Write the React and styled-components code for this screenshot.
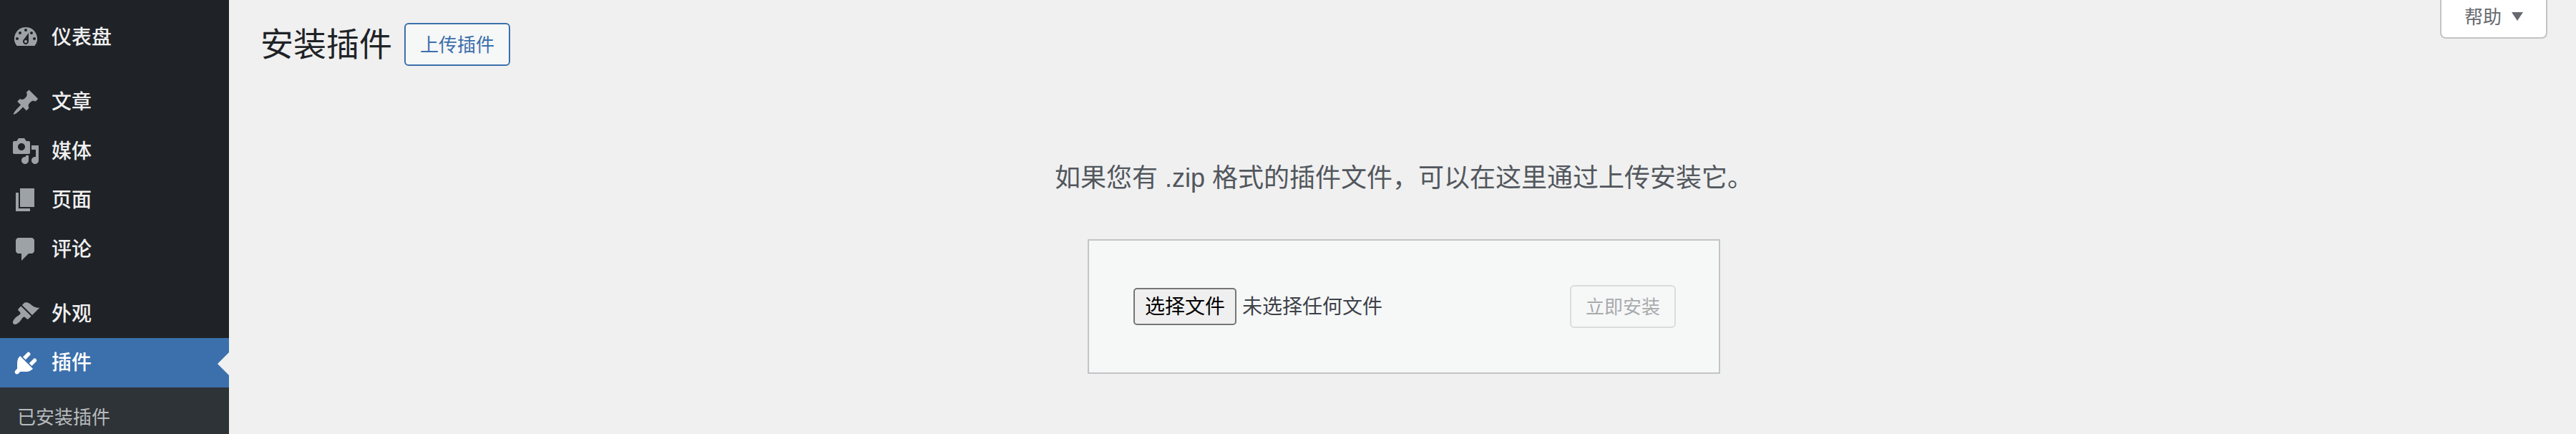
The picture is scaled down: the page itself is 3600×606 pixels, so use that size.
import React, { useRef, useState } from 'react';
import styled, { createGlobalStyle } from 'styled-components';

// 20x20 icon paths for the admin menu
const icons = {
  dashboard:
    'M3.76 16h12.48A7.998 7.998 0 0010 3a7.998 7.998 0 00-6.24 13zM10 4c.55 0 1 .45 1 1s-.45 1-1 1-1-.45-1-1 .45-1 1-1zM6 6c.55 0 1 .45 1 1s-.45 1-1 1-1-.45-1-1 .45-1 1-1zm8 0c.55 0 1 .45 1 1s-.45 1-1 1-1-.45-1-1 .45-1 1-1zm-5.37 5.55L12 7v6c0 1.1-.9 2-2 2s-2-.9-2-2c0-.57.24-1.08.63-1.45zM4 10c.55 0 1 .45 1 1s-.45 1-1 1-1-.45-1-1 .45-1 1-1zm12 0c.55 0 1 .45 1 1s-.45 1-1 1-1-.45-1-1 .45-1 1-1zm-5 3c0-.55-.45-1-1-1s-1 .45-1 1 .45 1 1 1 1-.45 1-1z',
  post:
    'M10.44 3.02l1.82-1.82 6.36 6.35-1.83 1.82c-1.05-.68-2.48-.57-3.41.36l-.75.75c-.92.93-1.04 2.35-.35 3.41l-1.83 1.82-2.41-2.41-2.8 2.79c-.42.42-3.38 2.71-3.8 2.29s1.86-3.39 2.28-3.81l2.79-2.79L4.1 9.36l1.83-1.82c1.05.69 2.48.57 3.4-.36l.75-.75c.93-.92 1.05-2.35.36-3.41z',
  media:
    'M13 11V4c0-.55-.45-1-1-1h-1.67L9 1H5L3.67 3H2c-.55 0-1 .45-1 1v7c0 .55.45 1 1 1h10c.55 0 1-.45 1-1zM7 4.5c1.38 0 2.5 1.12 2.5 2.5S8.38 9.5 7 9.5 4.5 8.38 4.5 7 5.62 4.5 7 4.5zM14 6h5v10.5c0 1.38-1.12 2.5-2.5 2.5S14 17.88 14 16.5s1.12-2.5 2.5-2.5c.17 0 .34.02.5.05V9h-3V6zm-4 8.05V13h2v3.5c0 1.38-1.12 2.5-2.5 2.5S7 17.88 7 16.5 8.12 14 9.5 14c.17 0 .34.02.5.05z',
  page: 'M6 15V2h10v13H6zm-1 1h8v2H3V5h2v11z',
  comments:
    'M5 2h9c1.1 0 2 .9 2 2v7c0 1.1-.9 2-2 2h-2l-5 5v-5H5c-1.1 0-2-.9-2-2V4c0-1.1.9-2 2-2z',
  appearance:
    'M14.48 11.06L7.41 3.99l1.5-1.5c.5-.56 2.3-.47 3.51.32 1.21.8 1.43 1.28 2.91 2.1 1.18.64 2.45 1.26 4.45.85zm-.71.71L6.7 4.7 4.93 6.47c-.39.39-.39 1.02 0 1.41l1.06 1.06c.39.39.39 1.03 0 1.42-.6.6-1.43 1.11-2.21 1.69-.35.26-.7.53-1.01.84C1.43 14.23.4 16.08 1.4 17.07c.99 1 2.84-.03 4.18-1.36.31-.31.58-.66.85-1.02.57-.78 1.08-1.61 1.69-2.21.39-.39 1.02-.39 1.41 0l1.06 1.06c.39.39 1.02.39 1.41 0z',
  plugins:
    'M13.11 4.36L9.87 7.6 8 5.73l3.24-3.24c.35-.34 1.05-.2 1.56.32.52.51.66 1.21.31 1.55zm-8 1.77l.91-1.12 9.01 9.01-1.19.84c-.71.71-2.63 1.16-3.82 1.16H6.14L4.9 17.26c-.59.59-1.54.59-2.12 0-.59-.58-.59-1.53 0-2.12l1.24-1.24v-3.88c0-1.13.4-3.19 1.09-3.89zm7.26 3.97l3.24-3.24c.34-.35 1.04-.21 1.55.31.52.51.66 1.21.31 1.55l-3.24 3.25z',
};

const menu = [
  { label: '仪表盘', icon: 'dashboard' },
  { label: '文章', icon: 'post', separated: true },
  { label: '媒体', icon: 'media' },
  { label: '页面', icon: 'page' },
  { label: '评论', icon: 'comments' },
  { label: '外观', icon: 'appearance', separated: true },
  { label: '插件', icon: 'plugins', current: true, children: ['已安装插件'] },
];

function MenuItem({ label, icon, separated, current, children }) {
  return (
    <MenuEntry $separated={separated}>
      <MenuLink href="#" $current={current}>
        <MenuIcon viewBox="0 0 20 20" $current={current} aria-hidden="true">
          <path d={icons[icon]} />
        </MenuIcon>
        {label}
      </MenuLink>
      {children && (
        <SubMenu>
          {children.map(name => (
            <li key={name}>
              <SubMenuLink href="#">{name}</SubMenuLink>
            </li>
          ))}
        </SubMenu>
      )}
    </MenuEntry>
  );
}

function UploadForm() {
  const fileInput = useRef(null);
  const [fileName, setFileName] = useState('');

  const onFileChange = e => {
    const file = e.target.files[0];
    setFileName(file ? file.name : '');
  };

  return (
    <Form onSubmit={e => e.preventDefault()}>
      <FileField>
        <HiddenInput
          ref={fileInput}
          type="file"
          accept=".zip"
          tabIndex={-1}
          aria-labelledby="choose-file"
          onChange={onFileChange}
        />
        <FileButton
          id="choose-file"
          type="button"
          onClick={() => fileInput.current.click()}
        >
          选择文件
        </FileButton>
        <FileName>{fileName || '未选择任何文件'}</FileName>
      </FileField>
      <Button type="submit" disabled={!fileName}>
        立即安装
      </Button>
    </Form>
  );
}

function App() {
  return (
    <>
      <GlobalStyle />
      <Layout>
        <Sidebar>
          <Menu>
            {menu.map(item => (
              <MenuItem key={item.label} {...item} />
            ))}
          </Menu>
        </Sidebar>
        <Content>
          <TopBar>
            <Heading>
              <Title>安装插件</Title>
              <Button type="button">上传插件</Button>
            </Heading>
            <HelpButton type="button">
              帮助
              <Caret viewBox="0 0 16 12" aria-hidden="true">
                <path d="M0 0h16L8 12z" />
              </Caret>
            </HelpButton>
          </TopBar>
          <Upload>
            <UploadHelp>
              如果您有 .zip 格式的插件文件，可以在这里通过上传安装它。
            </UploadHelp>
            <UploadForm />
          </Upload>
        </Content>
      </Layout>
    </>
  );
}

const GlobalStyle = createGlobalStyle`
  *, *::before, *::after {
    box-sizing: border-box;
  }

  body {
    margin: 0;
    background: #f0f0f0;
    color: #3e4349;
    font-family: 'Liberation Sans', 'Noto Sans CJK SC', sans-serif;
    font-size: 26px;
    line-height: 1.4;
  }

  button {
    font-family: inherit;
    line-height: inherit;
    cursor: pointer;
  }
`;

const Layout = styled.div`
  display: flex;
  min-height: 100vh;
`;

const Sidebar = styled.nav`
  position: sticky;
  top: 0;
  flex: 0 0 320px;
  height: 100vh;
  overflow-y: auto;
  scrollbar-width: none;
  background: #1f2327;
`;

const Menu = styled.ul`
  margin: 0;
  padding: 18px 0 0;
  list-style: none;
`;

const MenuEntry = styled.li`
  margin-top: ${props => (props.$separated ? '22px' : '0')};
`;

const MenuLink = styled.a`
  position: relative;
  display: flex;
  align-items: center;
  padding: 17px 0 15px;
  background: ${props => (props.$current ? '#3b70ac' : 'transparent')};
  color: ${props => (props.$current ? '#fff' : '#f0f0f1')};
  font-size: 28px;
  font-weight: 500;
  line-height: 1.3;
  text-decoration: none;

  /* notch pointing at the current page */
  &::after {
    content: '';
    display: ${props => (props.$current ? 'block' : 'none')};
    position: absolute;
    right: 0;
    border: 16px solid transparent;
    border-left-width: 0;
    border-right-color: #f0f0f0;
  }
`;

const MenuIcon = styled.svg`
  width: 40px;
  height: 40px;
  margin: -5px 16px -3px;
  fill: ${props => (props.$current ? '#fff' : '#9da2a6')};
`;

const SubMenu = styled.ul`
  margin: 0;
  padding: 14px 0;
  background: #2e3337;
  list-style: none;
`;

const SubMenuLink = styled.a`
  display: block;
  padding: 10px 24px;
  color: #b7babd;
  text-decoration: none;
`;

const Content = styled.main`
  flex: 1;
  min-width: 0;
  padding: 0 40px 40px 44px;
`;

const TopBar = styled.header`
  display: flex;
  align-items: flex-start;
  justify-content: space-between;
`;

const Heading = styled.div`
  display: flex;
  align-items: center;
  gap: 17px;
  padding-top: 32px;
`;

const Title = styled.h1`
  margin: 0;
  color: #1f2327;
  font-size: 46px;
  font-weight: 400;
  line-height: 60px;
`;

const Button = styled.button`
  height: 60px;
  padding: 2px 20px 0;
  border: 2px solid #3b70ac;
  border-radius: 6px;
  background: #f6f7f7;
  color: #3b70ac;
  font-size: 26px;

  &:disabled {
    border-color: #dcdcde;
    color: #a8aaad;
    cursor: default;
  }
`;

const HelpButton = styled.button`
  display: flex;
  align-items: center;
  gap: 14px;
  height: 54px;
  padding: 0 32px 4px;
  border: 2px solid #c3c4c7;
  border-top: 0;
  border-radius: 0 0 8px 8px;
  background: #fff;
  color: #666a70;
  font-size: 26px;
`;

const Caret = styled.svg`
  width: 16px;
  height: 12px;
  margin-bottom: 2px;
  fill: currentColor;
`;

const Upload = styled.section`
  padding-top: 130px;
`;

const UploadHelp = styled.p`
  margin: 0;
  color: #52575d;
  font-size: 36px;
  line-height: 54px;
  text-align: center;
`;

const Form = styled.form`
  display: flex;
  align-items: center;
  justify-content: space-between;
  max-width: 884px;
  margin: 58px auto 0;
  padding: 62px 60px;
  border: 2px solid #c3c4c7;
  background: #f6f7f7;
`;

const FileField = styled.div`
  display: flex;
  align-items: center;
  gap: 8px;
  padding-left: 2px;
  font-size: 28px;
`;

const HiddenInput = styled.input`
  display: none;
`;

const FileButton = styled.button`
  height: 52px;
  padding: 2px 14px 0;
  border: 2px solid #767676;
  border-radius: 5px;
  background: #efefef;
  color: #000;
  font-size: 28px;
`;

const FileName = styled.span`
  padding-top: 2px;
  color: #3e4349;
`;

export default App;
